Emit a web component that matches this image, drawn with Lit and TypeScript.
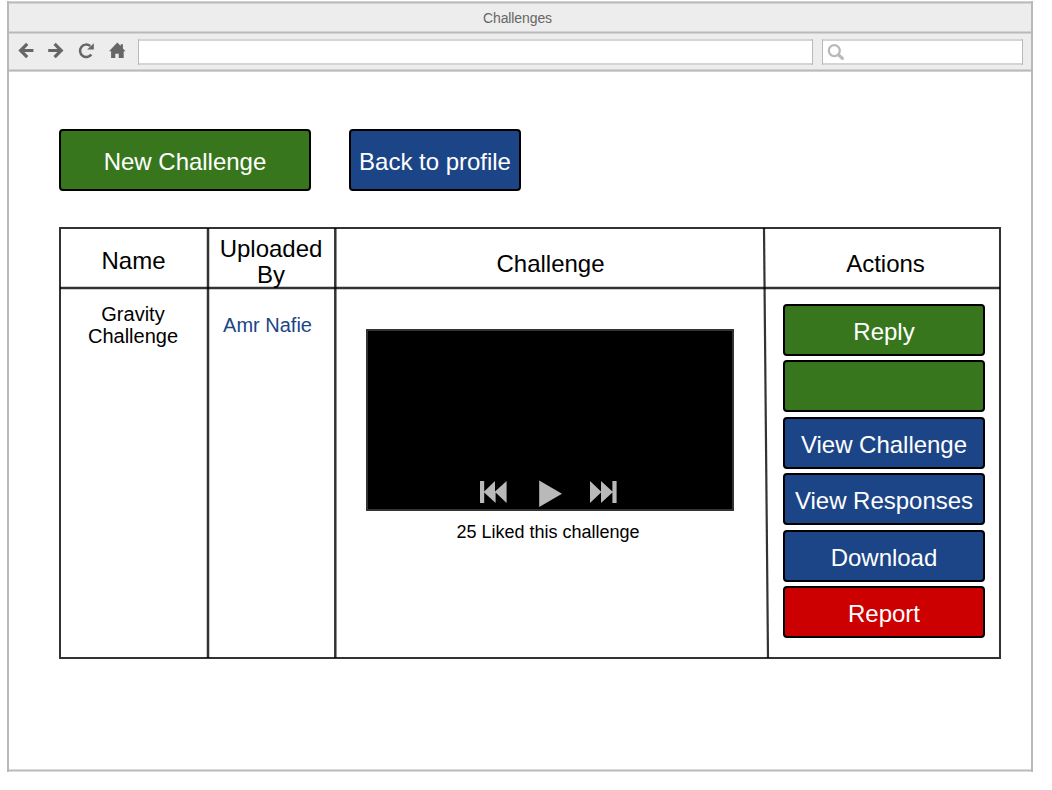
import { LitElement, html, css } from "lit";
import { customElement, property } from "lit/decorators.js";

@customElement("action-button")
class ActionButton extends LitElement {
  @property() label = "";

  static styles = css`
    :host {
      display: block;
      box-sizing: border-box;
      color: #fff;
    }
    .btn {
      box-sizing: border-box;
      display: flex;
      align-items: center;
      justify-content: center;
      width: 100%;
      height: 100%;
      padding: 4px 0 0;
      margin: 0;
      border: 2px solid #000;
      border-radius: 4px;
      background: var(--fill);
      color: inherit;
      font: 24px/26px "Liberation Sans", Arial, sans-serif;
      letter-spacing: -0.02px;
      white-space: nowrap;
    }
  `;

  render() {
    return html`<button class="btn">${this.label}</button>`;
  }
}

@customElement("browser-bar")
class BrowserBar extends LitElement {
  static styles = css`
    :host {
      display: block;
      background: #ededed;
    }
    .rule {
      height: 3px;
      background: linear-gradient(#d3d3d3 1px, #b9b9b9 1px 2px, #d3d3d3 2px);
    }
    .title {
      height: 27px;
      box-sizing: border-box;
      display: flex;
      align-items: center;
      justify-content: center;
      padding: 0 5px 0 0;
      font: 14px/16px "Liberation Sans", Arial, sans-serif;
      letter-spacing: -0.1px;
      color: #666;
    }
    .tools {
      display: flex;
      height: 35px;
      box-sizing: border-box;
      padding: 5px 8px 4px 9px;
    }
    .icons {
      display: block;
      width: 120px;
      height: 26px;
      flex: none;
    }
    .field {
      box-sizing: border-box;
      height: 26px;
      background: #fff;
      border: solid #b9b9b9;
      border-width: 0 1px;
      box-shadow: inset 0 2px #d4d4d4, inset 0 -2px #d4d4d4;
    }
    .address {
      width: 675px;
    }
    .search {
      width: 201px;
      margin-left: 9px;
    }
    .glass {
      display: block;
      width: 26px;
      height: 26px;
    }
  `;

  render() {
    return html`
      <div class="rule"></div>
      <div class="title">Challenges</div>
      <div class="rule"></div>
      <div class="tools">
        <svg class="icons" viewBox="18 39 120 26" fill="none" stroke="#666" stroke-width="3.2">
          <path d="M33.4 50.5H21M27.2 43.9L20.6 50.5L27.2 57.1" />
          <path d="M48.2 50.5H60.6M54.6 43.9L61.2 50.5L54.6 57.1" />
          <path d="M91.3 54.4A6.2 6.2 0 1 1 90.2 46" stroke-width="2.5" />
          <path d="M93.8 43.2V49.6H87.2Z" fill="#666" stroke="none" />
          <path
            d="M117.3 42.6L109 51.2H111.1V58.1H115.3V53.8H118.7V58.1H123.7V51.2H125.6L122.9 48.4V44.3H120.7V46.1Z"
            fill="#666"
            stroke="none"
          />
        </svg>
        <div class="field address"></div>
        <div class="field search">
          <svg class="glass" viewBox="823 39 26 26" fill="none" stroke="#b9b9b9">
            <circle cx="834.3" cy="50.6" r="5.5" stroke-width="2.3" />
            <path d="M838.6 54.8L842.4 58.4" stroke-width="3.2" stroke-linecap="round" />
          </svg>
        </div>
      </div>
      <div class="rule"></div>
    `;
  }
}

@customElement("video-player")
class VideoPlayer extends LitElement {
  static styles = css`
    :host {
      box-sizing: border-box;
      display: flex;
      align-items: flex-end;
      justify-content: center;
      background: #000;
      border: 2px solid #333;
      width: 368px;
      height: 182px;
    }
    .controls {
      display: block;
      width: 140px;
      height: 30px;
    }
  `;

  render() {
    return html`
      <svg class="controls" viewBox="480 479 140 30" fill="#b9b9b9">
        <path d="M480 481H484.2V491.4L495 481V491.4L506.6 481V503L495.6 492.6V503L484.2 492.6V503H480Z" />
        <path d="M539.2 480.5L562 493.7L539.2 507Z" />
        <path d="M590 481L601 491.4V481L612.4 491.4V481H616.6V503H612.4V492.6L601 503V492.6L590 503Z" />
      </svg>
    `;
  }
}

@customElement("app-root")
class AppRoot extends LitElement {
  private actions = [
    { label: "Reply", tone: "green" },
    { label: "", tone: "green" },
    { label: "View Challenge", tone: "blue" },
    { label: "View Responses", tone: "blue" },
    { label: "Download", tone: "blue" },
    { label: "Report", tone: "red" },
  ];

  static styles = css`
    :host {
      display: block;
      box-sizing: border-box;
      width: 1052px;
      height: 790px;
      padding: 1px 0 0 7px;
      background: #fff;
      color: #000;
      font-family: "Liberation Sans", Arial, sans-serif;
      overflow: hidden;
    }
    .window {
      box-sizing: border-box;
      width: 1026px;
      height: 771px;
      border: solid #b9b9b9;
      border-width: 0 2px;
      display: flex;
      flex-direction: column;
    }
    .content {
      flex: 1;
      padding: 57px 0 0 50px;
    }
    .edge {
      height: 3px;
      background: linear-gradient(#dcdcdc 1px, #b9b9b9 1px 2px, #dcdcdc 2px);
    }
    .green { --fill: #38761d; }
    .blue { --fill: #1c4587; }
    .red { --fill: #cc0000; }
    .toolbar {
      display: flex;
      gap: 38px;
      height: 62px;
    }
    .create { width: 252px; }
    .back { width: 172px; }
    .table {
      display: grid;
      box-sizing: border-box;
      width: 942px;
      height: 432px;
      margin-top: 36px;
      padding: 2px;
      grid-template-columns: 147px 127px 432px 232px;
      grid-template-rows: 60px 368px;
      position: relative;
    }
    .lines {
      position: absolute;
      inset: 0;
      width: 942px;
      height: 432px;
    }
    .cell {
      display: flex;
      flex-direction: column;
      align-items: center;
      text-align: center;
    }
    .head {
      font-size: 24px;
      line-height: 26px;
    }
    .name { padding: 19px 2px 0 0; }
    .by { padding: 7px 1px 0 0; }
    .challenge { padding: 22px 1px 0 0; }
    .acts { padding: 22px 0 0 5px; }
    .text {
      font-size: 20px;
      line-height: 22px;
    }
    .title { padding: 14px 3px 0 0; }
    .user {
      padding: 25px 8px 0 0;
      color: #1c4587;
    }
    .media { padding: 40px 0 0; }
    .player { margin-right: 3px; }
    .likes {
      margin: 11px 6px 0 0;
      font-size: 18px;
      line-height: 20px;
    }
    .list {
      display: grid;
      grid-template-rows: repeat(6, 52px);
      row-gap: 4.4px;
      padding: 15px 0 0 16px;
      align-content: start;
    }
    .action {
      width: 202px;
      height: 52px;
    }
  `;

  render() {
    return html`
      <div class="window">
        <browser-bar></browser-bar>
        <div class="content">
          <div class="toolbar">
            <action-button class="create green" label="New Challenge"></action-button>
            <action-button class="back blue" label="Back to profile"></action-button>
          </div>
          <div class="table">
            <svg class="lines" viewBox="0 0 942 432" fill="none" stroke="#000" stroke-opacity="0.8" stroke-width="2">
              <rect x="1" y="1" width="940" height="430" />
              <path d="M1 61H941" stroke-width="2.5" />
              <path d="M149 1V431" stroke-width="2.5" />
              <path d="M276.3 1V431" stroke-width="2.5" />
              <path d="M705 1L709 431" stroke-width="2.2" />
            </svg>
            <div class="cell head name">Name</div>
            <div class="cell head by">Uploaded<br />By</div>
            <div class="cell head challenge">Challenge</div>
            <div class="cell head acts">Actions</div>
            <div class="cell text title">Gravity<br />Challenge</div>
            <div class="cell text user">Amr Nafie</div>
            <div class="cell media">
              <video-player class="player"></video-player>
              <div class="likes">25 Liked this challenge</div>
            </div>
            <div class="list">
              ${this.actions.map(
                (a) => html`<action-button class="action ${a.tone}" label=${a.label}></action-button>`
              )}
            </div>
          </div>
        </div>
        <div class="edge"></div>
      </div>
    `;
  }
}
